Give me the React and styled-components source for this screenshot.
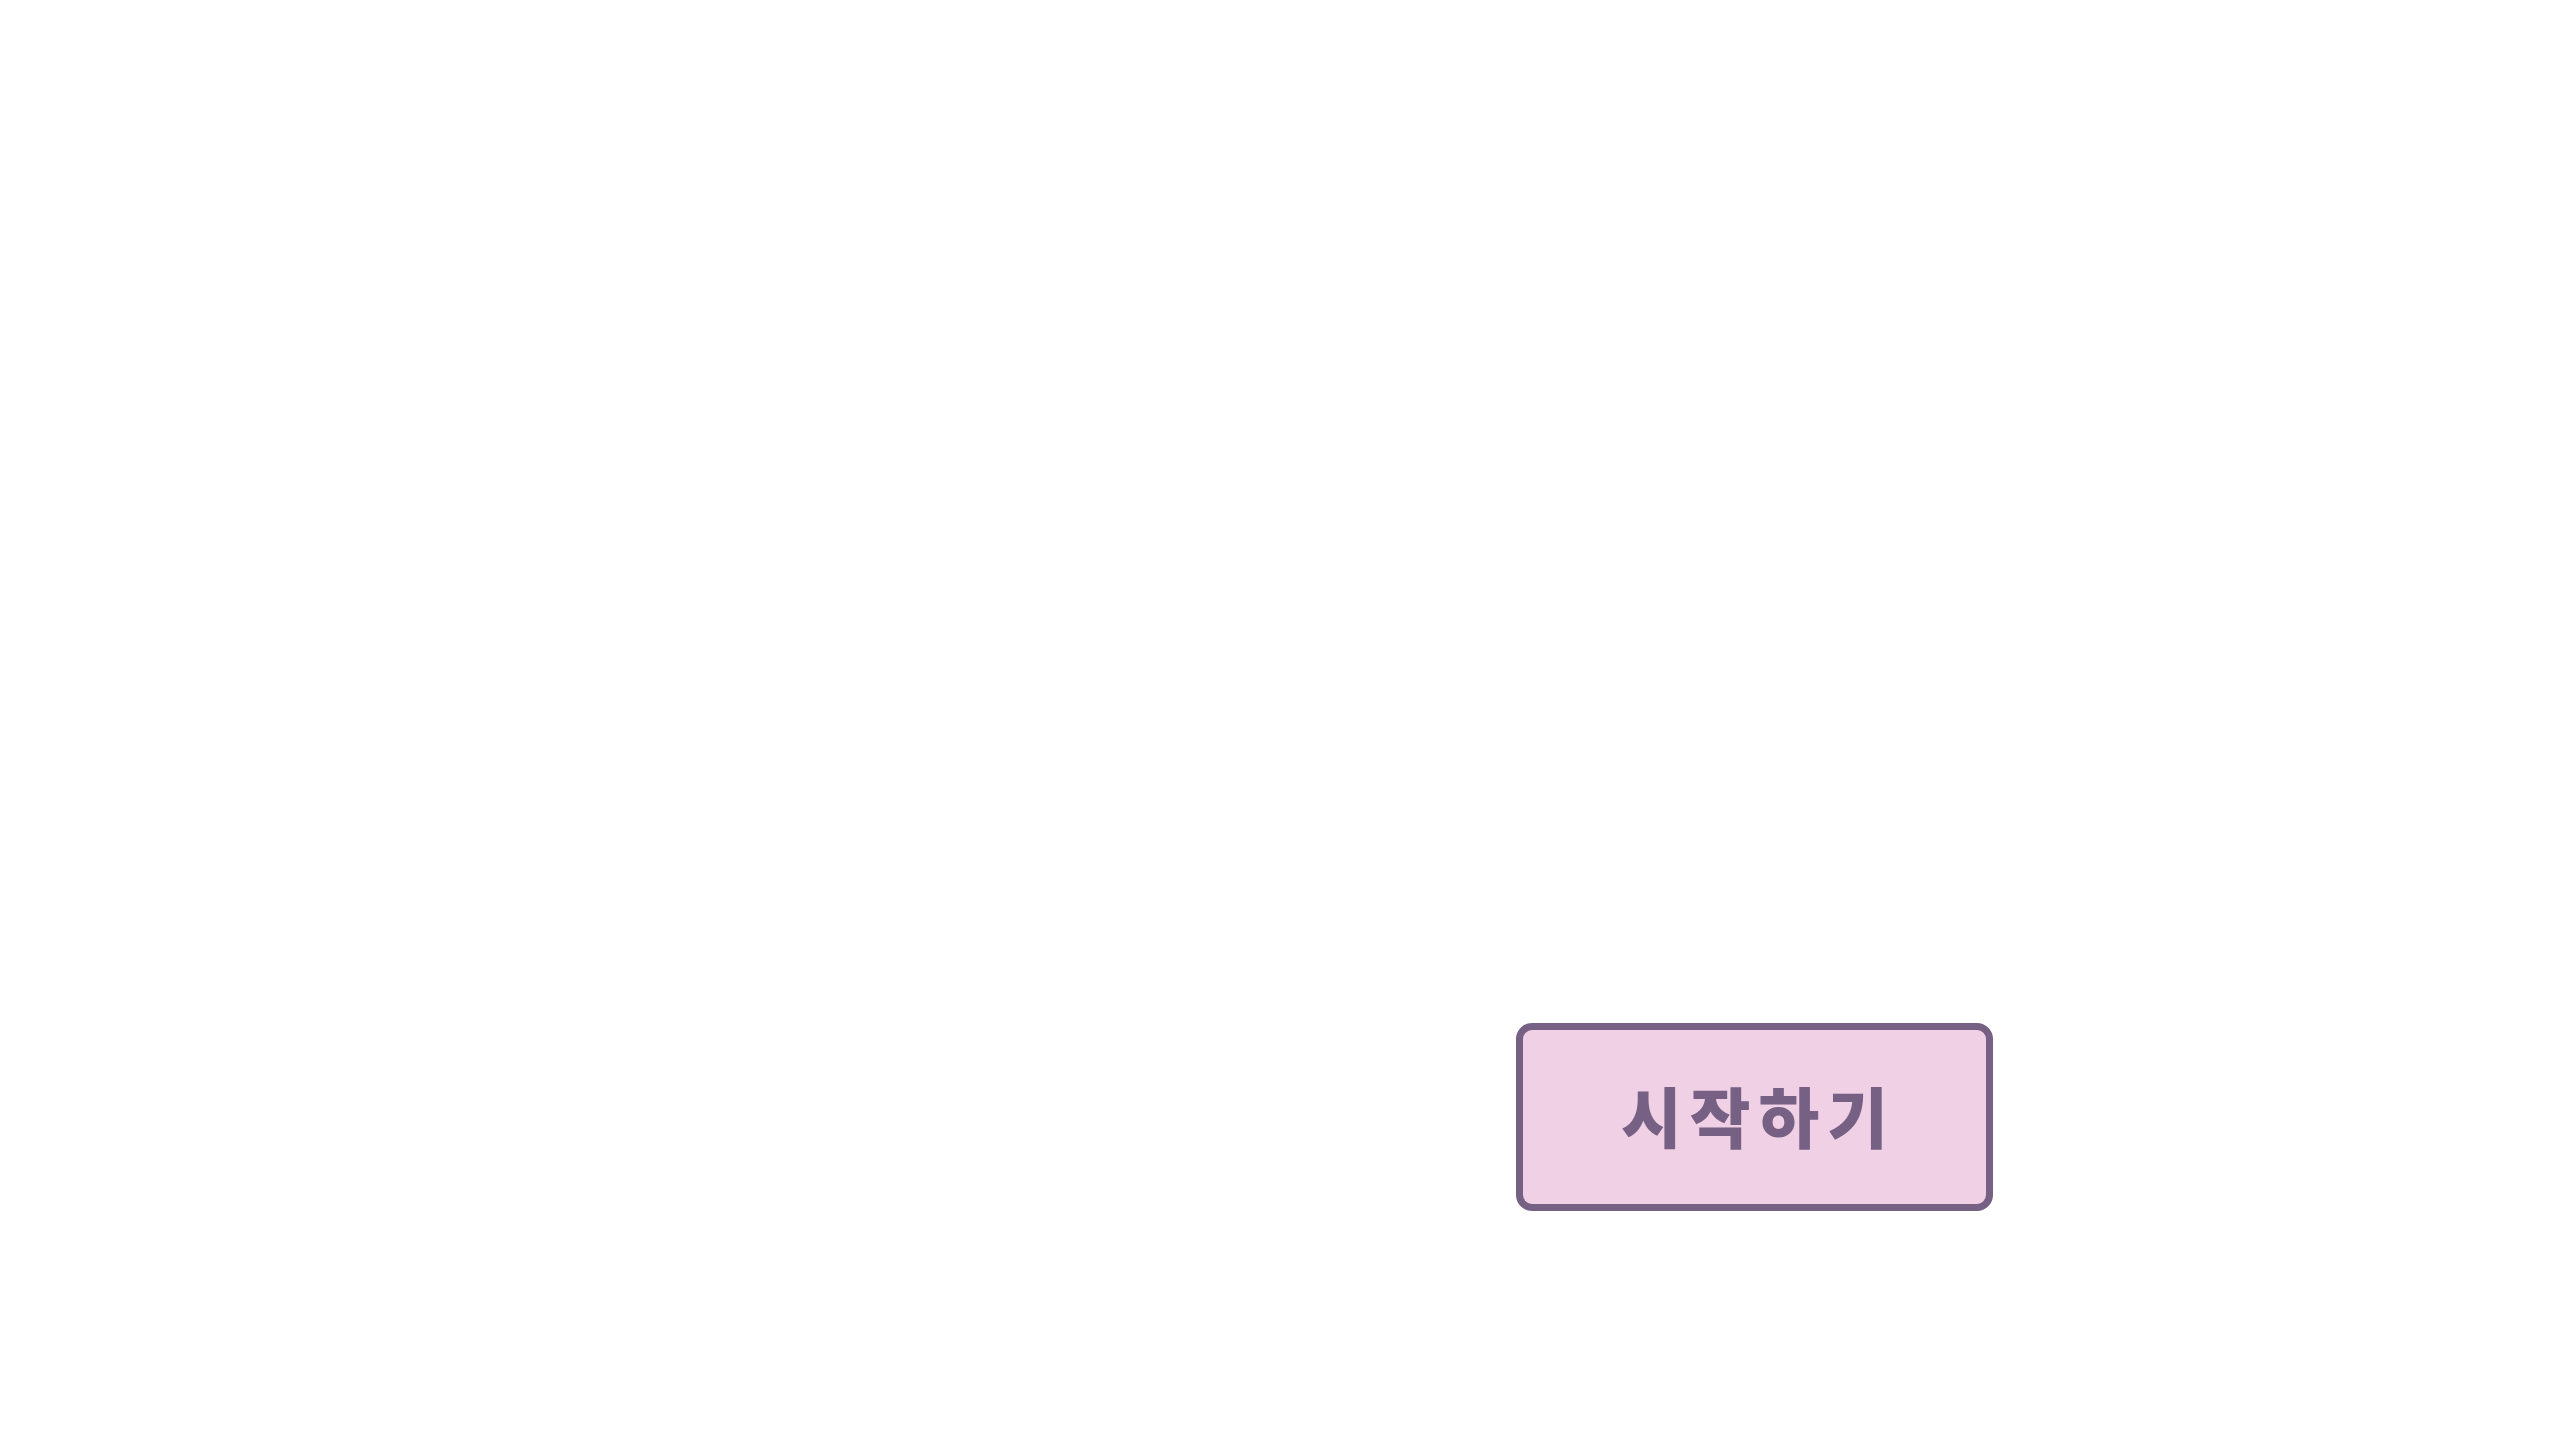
import React from "react";
import styled, { createGlobalStyle } from "styled-components";

const Global = createGlobalStyle`
  html, body { margin: 0; padding: 0; background: #ffffff; }
  body { font-family: "Noto Sans CJK KR", "Noto Sans", sans-serif; }
`;

const Page = styled.main`
  box-sizing: border-box;
  width: 2560px;
  height: 1440px;
  display: flex;
  align-items: flex-start;
  justify-content: flex-start;
  padding: 1023px 0 0 1516px;
`;

const StartButton = styled.button`
  box-sizing: border-box;
  width: 477px;
  height: 188px;
  display: flex;
  align-items: center;
  justify-content: center;
  background: #f0d0e4;
  border: 7px solid #766185;
  border-radius: 16px;
  color: #766185;
  font-family: "Noto Sans CJK KR", "Noto Sans", sans-serif;
  font-weight: 900;
  font-size: 66px;
  letter-spacing: 8px;
  line-height: 1;
  padding: 0 0 6px 8px;
  cursor: pointer;
`;

export default function App() {
  return (
    <>
      <Global />
      <Page>
        <StartButton>시작하기</StartButton>
      </Page>
    </>
  );
}
